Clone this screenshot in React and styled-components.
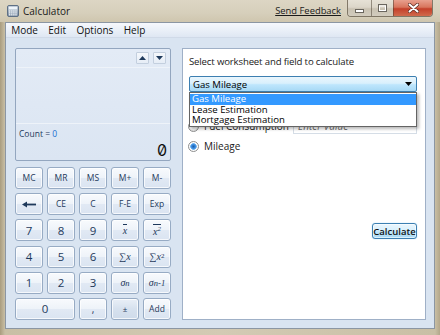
import React from "react";
import styled, { createGlobalStyle } from "styled-components";

const Global = createGlobalStyle`
  html, body { margin: 0; padding: 0; }
  body {
    width: 440px; height: 335px; overflow: hidden;
    font-family: "Open Sans", "Noto Sans", sans-serif;
  }
`;

const Window = styled.div`
  width: 440px; height: 335px; box-sizing: border-box;
  display: flex; flex-direction: column;
  background: linear-gradient(90deg, #a99c7e 0px, #c9bfa5 5px, #d3cab4 50%, #c9bfa5 435px, #b3a78a 440px);
`;

const TitleBar = styled.div`
  height: 22px; flex: none;
  display: flex; align-items: flex-start;
  background: linear-gradient(180deg, #ddd6c4 0%, #d6cfbb 60%, #cfc6ae 100%);
`;

const AppIcon = styled.svg`
  margin: 5px 0 0 7px; flex: none;
`;

const Title = styled.div`
  margin: 4px 0 0 4px;
  font-size: 10px; line-height: 14px; color: #1a1a1a;
`;

const Spacer = styled.div` flex: 1; `;

const Feedback = styled.a`
  margin: 4px 6px 0 0;
  font-size: 9.4px; line-height: 14px; color: #1a1a1a;
  text-decoration: underline; cursor: pointer;
`;

const CaptionGroup = styled.div`
  display: flex; height: 16px; margin-right: 7px; flex: none;
  border: 1px solid rgba(70, 60, 45, 0.6); border-top: none;
  border-radius: 0 0 4px 4px; overflow: hidden;
  box-shadow: 0 0 1px rgba(255,255,255,0.6);
`;

const CapBtn = styled.div`
  width: ${p => p.$w}px; height: 100%;
  display: flex; align-items: center; justify-content: center;
  background: ${p => p.$close
    ? "linear-gradient(180deg, #e8a08e 0%, #d8755d 45%, #c4402a 55%, #d06a4c 100%)"
    : "linear-gradient(180deg, #e6e1d6 0%, #dcd6c9 45%, #c9c2b2 55%, #d2ccbe 100%)"};
  & + & { border-left: 1px solid rgba(70, 60, 45, 0.5); }
`;

const Client = styled.div`
  flex: 1; margin: 0 5px 6px; min-height: 0;
  border: 1px solid #8b96a3;
  background: #d9e4f1;
  display: flex; flex-direction: column;
`;

const MenuBar = styled.div`
  height: 15px; flex: none; display: flex; align-items: center;
  background: linear-gradient(180deg, #f6f8fc 0%, #eaf0f8 50%, #dfe7f3 100%);
  border-bottom: 1px solid #d0dae8;
  box-sizing: border-box;
`;

const MenuItem = styled.span`
  padding: 0 5.2px; font-size: 10px; line-height: 15px; color: #111;
`;

const Body = styled.div`
  flex: 1; display: flex; gap: 11px; min-height: 0;
  padding: 10px 8px 8px 9px;
`;

const LeftCol = styled.div`
  width: 156px; flex: none; display: flex; flex-direction: column; gap: 6px;
`;

const Display = styled.div`
  height: 113px; box-sizing: border-box; flex: none;
  border: 1px solid #93a6bf; border-radius: 2px;
  background: linear-gradient(180deg, #e3ebf6 0%, #dbe5f2 100%);
  display: flex; flex-direction: column;
`;

const DispToolbar = styled.div`
  height: 15px; padding: 3px 4px 0 0; box-sizing: border-box;
  display: flex; justify-content: flex-end; gap: 4px;
`;

const ScrollBtn = styled.div`
  width: 13px; height: 12px; box-sizing: border-box;
  border: 1px solid #c3cfde; border-radius: 1px;
  background: linear-gradient(180deg, #f4f7fb, #e6edf6);
  display: flex; align-items: center; justify-content: center;
`;

const Divider = styled.div`
  height: 1px; background: #eef3f9; margin: ${p => p.$m || "0"};
`;

const History = styled.div` flex: 1; `;

const CountLine = styled.div`
  padding: 4px 0 0 3px; font-size: 8.5px; line-height: 12px; color: #1e395b;
`;

const CountNum = styled.span` color: #1a6fd0; `;

const Value = styled.div`
  text-align: right; padding: 0 3px 0 0;
  font-family: Inter, "Noto Sans", sans-serif;
  font-feature-settings: "zero" 1;
  font-size: 16px; line-height: 20px; color: #111;
`;

const Keypad = styled.div`
  display: grid;
  grid-template-columns: repeat(5, 28px);
  grid-auto-rows: 22px;
  gap: 4.2px 4px;
`;

const Key = styled.div`
  grid-column: span ${p => p.$span || 1};
  box-sizing: border-box;
  border: 1px solid #97abc4; border-radius: 3px;
  background: ${p => p.$dark
    ? "linear-gradient(180deg, #e9eff7 0%, #d6e1ee 50%, #cfdbea 100%)"
    : "linear-gradient(180deg, #f8fafd 0%, #eef3f9 48%, #e1e9f4 52%, #dae4f1 100%)"};
  box-shadow: inset 0 0 0 1px rgba(255,255,255,0.75);
  color: #1e395b;
  display: flex; align-items: center; justify-content: center;
  font-family: ${p => p.$serif ? '"Liberation Serif", "DejaVu Serif", serif' : '"Open Sans", "Noto Sans", sans-serif'};
  font-size: ${p => p.$size || 8.5}px;
  line-height: 1;
  font-style: ${p => p.$italic ? "italic" : "normal"};
`;

const Over = styled.span`
  border-top: 1px solid #1e395b; padding-top: 1px; font-style: italic;
`;

const Sub = styled.sub` font-size: 0.85em; vertical-align: -2px; `;
const Sup = styled.sup` font-size: 0.7em; vertical-align: 4px; `;

const RightPanel = styled.div`
  flex: 1; box-sizing: border-box; min-width: 0;
  background: #fff; border: 1px solid #9fb0c7;
  padding: 6px 8px 0 6px;
  display: flex; flex-direction: column;
`;

const Heading = styled.div`
  font-size: 9.6px; letter-spacing: -0.15px; line-height: 13px; color: #1a1a1a;
`;

const ComboWrap = styled.div`
  position: relative; margin-top: 8px; height: 16px;
`;

const Combo = styled.div`
  height: 16px; box-sizing: border-box;
  border: 1px solid #3c7fb1; border-radius: 2px;
  background: linear-gradient(180deg, #eaf6fd 0%, #d9f0fc 45%, #bee6fd 55%, #a7d9f5 100%);
  display: flex; align-items: center; padding: 0 4px 0 3px;
  font-size: 9.6px; color: #000;
`;

const ComboText = styled.span` flex: 1; `;

const ListBox = styled.div`
  position: absolute; top: 16px; left: 0; right: 0; z-index: 2;
  background: #fff; border: 1px solid #646464;
  box-shadow: 2px 2px 3px rgba(0,0,0,0.28);
  padding: 1px 0 0;
`;

const ListItem = styled.div`
  height: 10.5px; line-height: 10.5px; font-size: 9.6px;
  padding-left: 2px;
  background: ${p => p.$sel ? "#3399ff" : "transparent"};
  color: ${p => p.$sel ? "#fff" : "#000"};
`;

const Fields = styled.div`
  margin-top: 4px; display: flex; flex-direction: column;
`;

const FieldRow = styled.div`
  height: 20px; display: flex; align-items: center;
`;

const Radio = styled.div`
  width: 11px; height: 11px; box-sizing: border-box; border-radius: 50%;
  margin-left: -1px; flex: none;
  border: 1px solid #8e8f8f;
  background: radial-gradient(circle at 50% 50%, ${p => p.$on ? "#1c5ea7 0, #3a8be0 2px, #6fb4f0 3px, #ffffff 3.6px" : "#eee 0, #f6f6f6 3px, #e4e4e4 4px"}, #f2f2f2 100%);
`;

const FieldLabel = styled.span`
  margin-left: 5px; font-size: 10px; color: #1a1a1a;
`;

const Input = styled.div`
  margin-left: auto; width: 124px; height: 16px; box-sizing: border-box;
  border: 1px solid #d5dde6; border-top-color: #abadb3;
  display: flex; align-items: center; padding-left: 4px;
  font-size: 10px; font-style: italic; color: #6d6d6d;
`;

const CalcBtn = styled.div`
  margin-top: 67px; align-self: flex-end;
  width: 45px; height: 16px; box-sizing: border-box;
  border: 1px solid #3c7fb1; border-radius: 3px;
  background: linear-gradient(180deg, #eaf6fd 0%, #d9f0fc 45%, #bee6fd 55%, #a7d9f5 100%);
  box-shadow: inset 0 0 0 1px rgba(255,255,255,0.6), 0 0 1px #6fc3f5;
  display: flex; align-items: center; justify-content: center;
  font-size: 9.5px; font-weight: 600; color: #111;
`;

const Arrow = ({ up }) => (
  <svg width="7" height="4" viewBox="0 0 7 4">
    <path d={up ? "M0 4 L3.5 0 L7 4 Z" : "M0 0 L3.5 4 L7 0 Z"} fill="#1e395b" />
  </svg>
);

const BackArrow = () => (
  <svg width="14" height="7" viewBox="0 0 14 7">
    <path d="M0 3.5 L5 0.5 L5 6.5 Z" fill="#1e395b" />
    <rect x="4" y="2.6" width="10" height="1.8" fill="#1e395b" />
  </svg>
);

const CalcIcon = () => (
  <AppIcon width="12" height="12" viewBox="0 0 12 12">
    <defs>
      <linearGradient id="ci" x1="0" y1="0" x2="0" y2="1">
        <stop offset="0" stopColor="#c9d3de" />
        <stop offset="1" stopColor="#7f90a4" />
      </linearGradient>
    </defs>
    <rect x="0.5" y="0.5" width="11" height="11" rx="1.5" fill="url(#ci)" stroke="#5f7085" />
    <rect x="2" y="2" width="8" height="2.4" fill="#eef4fa" />
    {[0, 1, 2].map(r => [0, 1, 2, 3].map(c => (
      <rect key={r + "-" + c} x={2 + c * 2.1} y={5.4 + r * 1.9} width="1.4" height="1.2" fill="#f4f7fb" />
    )))}
  </AppIcon>
);

export default function App() {
  return (
    <>
      <Global />
      <Window>
        <TitleBar>
          <CalcIcon />
          <Title>Calculator</Title>
          <Spacer />
          <Feedback>Send Feedback</Feedback>
          <CaptionGroup>
            <CapBtn $w={23}>
              <svg width="9" height="4" viewBox="0 0 9 4" style={{ marginTop: 5 }}>
                <rect x="0.5" y="0.5" width="8" height="3" fill="#fff" stroke="#6a665e" />
              </svg>
            </CapBtn>
            <CapBtn $w={21}>
              <svg width="9" height="8" viewBox="0 0 9 8">
                <rect x="0.5" y="0.5" width="8" height="7" fill="none" stroke="#6a665e" />
                <rect x="1.5" y="2" width="6" height="4.5" fill="none" stroke="#fff" />
              </svg>
            </CapBtn>
            <CapBtn $w={38} $close>
              <svg width="11" height="10" viewBox="0 0 11 10">
                <path d="M1.5 1.5 L9.5 8.5 M9.5 1.5 L1.5 8.5" stroke="#5a2a20" strokeWidth="3.4" strokeLinecap="round" />
                <path d="M1.5 1.5 L9.5 8.5 M9.5 1.5 L1.5 8.5" stroke="#fff" strokeWidth="2" strokeLinecap="round" />
              </svg>
            </CapBtn>
          </CaptionGroup>
        </TitleBar>
        <Client>
          <MenuBar>
            <MenuItem>Mode</MenuItem>
            <MenuItem>Edit</MenuItem>
            <MenuItem>Options</MenuItem>
            <MenuItem>Help</MenuItem>
          </MenuBar>
          <Body>
            <LeftCol>
              <Display>
                <DispToolbar>
                  <ScrollBtn><Arrow up /></ScrollBtn>
                  <ScrollBtn><Arrow /></ScrollBtn>
                </DispToolbar>
                <Divider $m="3px 0 0" />
                <History />
                <Divider />
                <CountLine>Count = <CountNum>0</CountNum></CountLine>
                <Value>0</Value>
              </Display>
              <Keypad>
                <Key>MC</Key>
                <Key>MR</Key>
                <Key>MS</Key>
                <Key>M+</Key>
                <Key>M-</Key>
                <Key><BackArrow /></Key>
                <Key>CE</Key>
                <Key>C</Key>
                <Key>F-E</Key>
                <Key>Exp</Key>
                <Key $size={11.5}>7</Key>
                <Key $size={11.5}>8</Key>
                <Key $size={11.5}>9</Key>
                <Key $serif $size={10}><Over>x</Over></Key>
                <Key $serif $size={10}><Over>x<Sup>2</Sup></Over></Key>
                <Key $size={11.5}>4</Key>
                <Key $size={11.5}>5</Key>
                <Key $size={11.5}>6</Key>
                <Key $serif $size={10}>∑<i>x</i></Key>
                <Key $serif $size={10}>∑<i>x</i><Sup>2</Sup></Key>
                <Key $size={11.5}>1</Key>
                <Key $size={11.5}>2</Key>
                <Key $size={11.5}>3</Key>
                <Key $serif $size={10} $italic>σ<Sub>n</Sub></Key>
                <Key $serif $size={10} $italic>σ<Sub>n-1</Sub></Key>
                <Key $size={11.5} $span={2}>0</Key>
                <Key $size={10}>,</Key>
                <Key $dark $size={8}>±</Key>
                <Key>Add</Key>
              </Keypad>
            </LeftCol>
            <RightPanel>
              <Heading>Select worksheet and field to calculate</Heading>
              <ComboWrap>
                <Combo>
                  <ComboText>Gas Mileage</ComboText>
                  <svg width="7" height="4" viewBox="0 0 7 4"><path d="M0 0 L3.5 4 L7 0 Z" fill="#000" /></svg>
                </Combo>
                <ListBox>
                  <ListItem $sel>Gas Mileage</ListItem>
                  <ListItem>Lease Estimation</ListItem>
                  <ListItem>Mortgage Estimation</ListItem>
                </ListBox>
              </ComboWrap>
              <Fields>
                <FieldRow />
                <FieldRow>
                  <Radio />
                  <FieldLabel>Fuel Consumption</FieldLabel>
                  <Input>Enter Value</Input>
                </FieldRow>
                <FieldRow>
                  <Radio $on />
                  <FieldLabel>Mileage</FieldLabel>
                </FieldRow>
              </Fields>
              <CalcBtn>Calculate</CalcBtn>
            </RightPanel>
          </Body>
        </Client>
      </Window>
    </>
  );
}
